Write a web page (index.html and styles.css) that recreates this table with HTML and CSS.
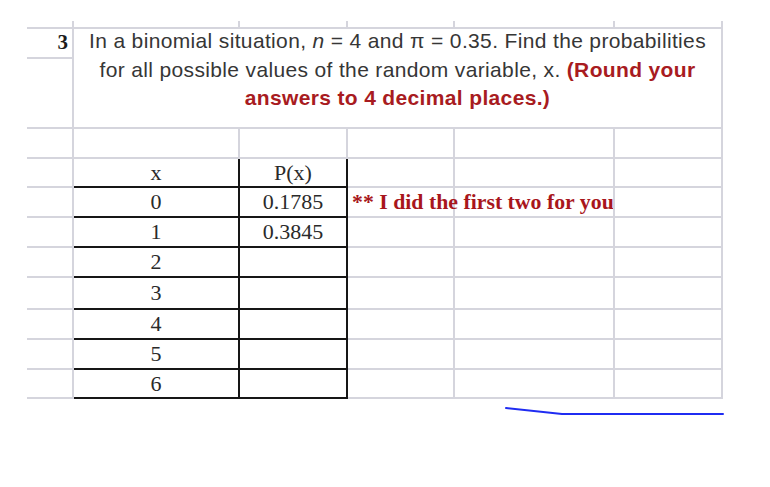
FILE: index.html
```html
<!DOCTYPE html>
<html>
<head>
<meta charset="utf-8">
<link rel="stylesheet" href="styles.css">
</head>
<body>
<div class="sheet">
  <div class="grid">
    <!-- stub row -->
    <div class="c stub"></div><div class="c stub"></div><div class="c stub"></div><div class="c stub"></div><div class="c stub"></div><div class="c stub"></div>
    <!-- question -->
    <div class="c num">3</div>
    <div class="c question">
      <p class="qtext">In a binomial situation, <i>n</i> = 4 and π = 0.35. Find the probabilities<br>for all possible values of the random variable, x. <b class="red">(Round your</b><br><b class="red">answers to 4 decimal places.)</b></p>
    </div>
    <div class="c"></div>
    <!-- empty row -->
    <div class="c"></div><div class="c"></div><div class="c"></div><div class="c"></div><div class="c"></div><div class="c"></div>
    <!-- header -->
    <div class="c"></div><div class="c t">x</div><div class="c t">P(x)</div><div class="c"></div><div class="c"></div><div class="c"></div>
    <!-- 0 -->
    <div class="c"></div><div class="c t">0</div><div class="c t">0.1785</div><div class="c note">** I did the first two for you</div><div class="c"></div><div class="c"></div>
    <!-- 1 -->
    <div class="c"></div><div class="c t">1</div><div class="c t">0.3845</div><div class="c"></div><div class="c"></div><div class="c"></div>
    <!-- 2 -->
    <div class="c"></div><div class="c t">2</div><div class="c t"></div><div class="c"></div><div class="c"></div><div class="c"></div>
    <!-- 3 -->
    <div class="c"></div><div class="c t">3</div><div class="c t"></div><div class="c"></div><div class="c"></div><div class="c"></div>
    <!-- 4 -->
    <div class="c"></div><div class="c t">4</div><div class="c t"></div><div class="c"></div><div class="c"></div><div class="c"></div>
    <!-- 5 -->
    <div class="c"></div><div class="c t">5</div><div class="c t"></div><div class="c"></div><div class="c"></div><div class="c"></div>
    <!-- 6 -->
    <div class="c"></div><div class="c t">6</div><div class="c t"></div><div class="c"></div><div class="c"></div><div class="c"></div>
  </div>
</div>
<svg class="ink" width="770" height="24" viewBox="0 0 770 24">
  <path d="M506 9 L562 15 L723 15" fill="none" stroke="#1f2cf2" stroke-width="2" stroke-linecap="round" stroke-linejoin="round"/>
</svg>
</body>
</html>
```
FILE: styles.css
```css
html, body {
  margin: 0;
  padding: 0;
  background: #ffffff;
}

.sheet {
  padding: 21px 0 0 27px;
}

.grid {
  display: grid;
  grid-template-columns: 47px 166px 108px 107px 160px 108px;
  grid-template-rows: 8px 30px 70px 30px 29px 30px 30px 30px 32px 30px 30px 29px;
  width: 696px;
}

.c {
  box-sizing: border-box;
  border-right: 2px solid #d5d5dd;
  border-bottom: 2px solid #d5d5dd;
  min-width: 0;
}

.num {
  font-family: "Liberation Serif", "Times New Roman", serif;
  font-weight: bold;
  font-size: 21px;
  color: #1c1c1c;
  text-align: right;
  padding-right: 4px;
  line-height: 26px;
}

.question {
  grid-column: 2 / 7;
  grid-row: 2 / 4;
  text-align: center;
}

.qtext {
  margin: -2px 0 0;
  font-family: "Liberation Sans", Arial, sans-serif;
  font-size: 21px;
  letter-spacing: 0.35px;
  line-height: 28.5px;
  color: #363636;
  white-space: nowrap;
}

.qtext i {
  font-style: italic;
}

.red {
  color: #a81b21;
  font-weight: bold;
}

.t {
  border-right-color: #161616;
  border-bottom-color: #161616;
  font-family: "Liberation Serif", "Times New Roman", serif;
  font-size: 22px;
  color: #2a2a2a;
  display: flex;
  align-items: center;
  justify-content: center;
}

.note {
  font-family: "Liberation Serif", "Times New Roman", serif;
  font-weight: bold;
  font-size: 21.8px;
  color: #a8161c;
  white-space: nowrap;
  display: flex;
  align-items: center;
  padding-left: 4px;
}

.ink {
  display: block;
}
```
